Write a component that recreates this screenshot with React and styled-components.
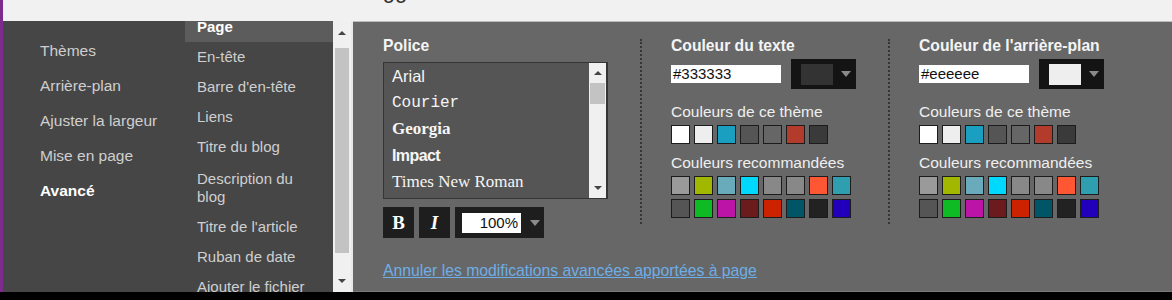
import React from 'react'
import styled, { createGlobalStyle } from 'styled-components';

const Global = createGlobalStyle`
    html, body { margin: 0; padding: 0; background: #000; }
    body { font-family: "Liberation Sans", Arial, sans-serif; }
    * { box-sizing: border-box; }
`;

const Frame = styled.div`
    width: 1172px;
    height: 300px;
    overflow: hidden;
    display: flex;
    flex-direction: column;
    background: #000;
`;

const Top = styled.div`
    height: 292px;
    display: flex;
    flex-direction: column;
    border-left: 3px solid #7d2b8c;
`;

const Header = styled.div`
    height: 21px;
    flex: none;
    overflow: hidden;
    background: #f1f1f1;
    padding-left: 348px;
`;

const Title = styled.div`
    font-size: 22px;
    line-height: 22px;
    margin-top: -20px;
    color: #333;
`;

const Body = styled.div`
    flex: 1;
    display: flex;
    min-height: 0;
`;

const Side = styled.div`
    width: 330px;
    display: flex;
    background: #464646;
`;

const Nav = styled.ul`
    list-style: none;
    margin: 0;
    padding: 12px 0 0 37px;
    width: 182px;
`;

const NavItem = styled.li`
    height: 35px;
    line-height: 35px;
    font-size: 15.5px;
    color: ${p => p.$active ? '#fff' : '#cfcfcf'};
    font-weight: ${p => p.$active ? 'bold' : 'normal'};
    white-space: nowrap;
`;

const Sub = styled.div`
    width: 148px;
    overflow: hidden;
`;

const SubList = styled.ul`
    list-style: none;
    margin: -9px 0 0;
    padding: 0;
`;

const SubItem = styled.li`
    padding: ${p => p.$wrap ? '8px 8px 6px 12px' : '6px 8px 6px 12px'};
    line-height: 18px;
    font-size: 15px;
    color: ${p => p.$active ? '#fff' : '#cfcfcf'};
    font-weight: ${p => p.$active ? 'bold' : 'normal'};
    background: ${p => p.$active ? '#5c5c5c' : 'transparent'};
`;

const Scroll = styled.div`
    width: 18px;
    background: #f0f0f0;
    display: flex;
    flex-direction: column;
    align-items: center;
    padding: 0 2px;
`;

const Arrow = styled.div`
    height: ${p => p.$h || 20}px;
    width: 100%;
    display: flex;
    align-items: center;
    justify-content: center;
    &::before {
        content: '';
        border-left: 4px solid transparent;
        border-right: 4px solid transparent;
        ${p => p.$down ? 'border-top: 4px solid #444;' : 'border-bottom: 4px solid #444;'}
    }
`;

const Thumb = styled.div`
    width: 100%;
    height: ${p => p.$h}px;
    background: #c3c3c3;
    margin-top: ${p => p.$top || 0}px;
`;

const Spacer = styled.div`
    flex: 1;
`;

const Gap = styled.div`
    width: 2px;
    background: #e8e8e8;
`;

const Main = styled.div`
    flex: 1;
    background: #676767;
    border-top: 1px solid #bdbdbd;
    border-bottom: 1px solid #7a7a7a;
    padding: 16px 0 0 30px;
    display: flex;
    flex-direction: column;
`;

const Columns = styled.div`
    display: flex;
    align-items: flex-start;
`;

const Col = styled.div`
    width: ${p => p.$w}px;
    padding-right: 30px;
    display: flex;
    flex-direction: column;
`;

const Sep = styled.div`
    width: 2px;
    height: 185px;
    margin-top: 1px;
    border-left: 2px dotted #353535;
    margin-right: 29px;
`;

const Heading = styled.div`
    font-size: 15.7px;
    font-weight: bold;
    color: #f4f4f4;
    line-height: 16px;
    margin-bottom: 8px;
    white-space: nowrap;
`;

const FontBox = styled.div`
    width: 225px;
    height: 137px;
    border: 1px solid #353535;
    border-right-width: 2px;
    background: #555;
    display: flex;
`;

const FontList = styled.ul`
    list-style: none;
    margin: 0;
    padding: 0;
    flex: 1;
`;

const FontItem = styled.li`
    height: 26.6px;
    line-height: 26px;
    padding-left: 8px;
    color: #f6f6f6;
    font-family: ${p => p.$family};
    font-size: ${p => p.$size || 16}px;
    font-weight: ${p => p.$bold ? 'bold' : 'normal'};
    letter-spacing: ${p => p.$ls || 0}px;
`;

const BoxScroll = styled(Scroll)`
    width: 17px;
    padding: 0 1px;
`;

const Tools = styled.div`
    display: flex;
    gap: 5px;
    margin-top: 8px;
`;

const ToolBtn = styled.div`
    width: 31px;
    height: 31px;
    background: #1e1e1e;
    color: #fff;
    display: flex;
    align-items: center;
    justify-content: center;
    font-family: "Liberation Serif", "Times New Roman", serif;
    font-weight: bold;
    font-size: 19px;
    font-style: ${p => p.$italic ? 'italic' : 'normal'};
`;

const SizeBox = styled.div`
    width: 89px;
    height: 31px;
    background: #1e1e1e;
    display: flex;
    align-items: center;
    padding-left: 7px;
    gap: 9px;
`;

const SizeInput = styled.div`
    width: 59px;
    height: 20px;
    background: #fff;
    color: #111;
    font-size: 15px;
    line-height: 20px;
    text-align: right;
    padding-right: 3px;
`;

const Caret = styled.div`
    border-left: 5px solid transparent;
    border-right: 5px solid transparent;
    border-top: 6px solid #8a8a8a;
`;

const Link = styled.a`
    margin-top: 24px;
    font-size: 15.75px;
    color: #6eaee6;
    text-decoration: underline;
`;

const PickRow = styled.div`
    display: flex;
    align-items: center;
    gap: 10px;
    margin-top: -3px;
`;

const HexInput = styled.div`
    width: 110px;
    height: 18px;
    background: #fff;
    color: #111;
    font-size: 15px;
    line-height: 18px;
    padding-left: 2px;
`;

const PickBtn = styled.div`
    width: 65px;
    height: 30px;
    background: #141414;
    display: flex;
    align-items: center;
    padding-left: 10px;
    gap: 8px;
`;

const PickSwatch = styled.div`
    width: 32px;
    height: 21px;
    background: ${p => p.$c};
`;

const Label = styled.div`
    font-size: 15.5px;
    color: #efefef;
    line-height: 17px;
    margin-top: ${p => p.$mt}px;
    margin-bottom: 5px;
    white-space: nowrap;
`;

const Swatches = styled.div`
    display: flex;
    gap: 4px;
    margin-bottom: 4px;
`;

const Swatch = styled.div`
    width: 19px;
    height: 19px;
    background: ${p => p.$c};
    border: 1px solid #1c1c1c;
`;

const Bottom = styled.div`
    flex: 1;
    background: #000;
`;

const navItems = ['Thèmes', 'Arrière-plan', 'Ajuster la largeur', 'Mise en page', 'Avancé'];
const subItems = ['Page', 'En-tête', "Barre d'en-tête", 'Liens', 'Titre du blog', 'Description du blog', "Titre de l'article", 'Ruban de date', 'Ajouter le fichier'];
const fonts = [
    { name: 'Arial', family: '"Liberation Sans", Arial, sans-serif', size: 16.5 },
    { name: 'Courier', family: '"Liberation Mono", "Courier New", monospace', size: 16 },
    { name: 'Georgia', family: '"Liberation Serif", Georgia, serif', size: 17, bold: true },
    { name: 'Impact', family: '"Liberation Sans Narrow", "Liberation Sans", sans-serif', size: 16, bold: true, ls: -0.6 },
    { name: 'Times New Roman', family: '"Liberation Serif", "Times New Roman", serif', size: 17 },
];
const theme = ['#ffffff', '#eeeeee', '#1a9fc0', '#555555', '#666666', '#b33b2c', '#3a3a3a'];
const rec1 = ['#9a9a9a', '#a2b800', '#6aabbb', '#00d9ff', '#888888', '#888888', '#ff5634', '#2f9fb0'];
const rec2 = ['#555555', '#0fbb25', '#bb14a6', '#6b1b1b', '#cc2200', '#005566', '#222222', '#2200bb'];

function ColorColumn({ title, hex, swatch, w }) {
    return (
        <Col $w={w}>
            <Heading>{title}</Heading>
            <PickRow>
                <HexInput>{hex}</HexInput>
                <PickBtn><PickSwatch $c={swatch} /><Caret /></PickBtn>
            </PickRow>
            <Label $mt={14}>Couleurs de ce thème</Label>
            <Swatches>{theme.map((c, i) => <Swatch key={i} $c={c} />)}</Swatches>
            <Label $mt={6}>Couleurs recommandées</Label>
            <Swatches>{rec1.map((c, i) => <Swatch key={i} $c={c} />)}</Swatches>
            <Swatches>{rec2.map((c, i) => <Swatch key={i} $c={c} />)}</Swatches>
        </Col>
    )
}

function App() {
    return (
        <>
            <Global />
            <Frame>
                <Top>
                    <Header><Title>Blogger</Title></Header>
                    <Body>
                        <Side>
                            <Nav>
                                {navItems.map(n => <NavItem key={n} $active={n === 'Avancé'}>{n}</NavItem>)}
                            </Nav>
                            <Sub>
                                <SubList>
                                    {subItems.map(n => (
                                        <SubItem key={n} $active={n === 'Page'} $wrap={n === 'Description du blog'}>{n}</SubItem>
                                    ))}
                                </SubList>
                            </Sub>
                        </Side>
                        <Scroll>
                            <Arrow $h={24} />
                            <Thumb $h={205} $top={3} />
                            <Spacer />
                            <Arrow $down $h={22} />
                        </Scroll>
                        <Gap />
                        <Main>
                            <Columns>
                                <Col $w={257}>
                                    <Heading>Police</Heading>
                                    <FontBox>
                                        <FontList>
                                            {fonts.map(f => (
                                                <FontItem key={f.name} $family={f.family} $size={f.size} $bold={f.bold} $ls={f.ls}>{f.name}</FontItem>
                                            ))}
                                        </FontList>
                                        <BoxScroll>
                                            <Arrow $h={20} />
                                            <Thumb $h={21} />
                                            <Spacer />
                                            <Arrow $down $h={20} />
                                        </BoxScroll>
                                    </FontBox>
                                    <Tools>
                                        <ToolBtn>B</ToolBtn>
                                        <ToolBtn $italic>I</ToolBtn>
                                        <SizeBox><SizeInput>100%</SizeInput><Caret /></SizeBox>
                                    </Tools>
                                </Col>
                                <Sep />
                                <ColorColumn w={217} title="Couleur du texte" hex="#333333" swatch="#333333" />
                                <Sep />
                                <ColorColumn w={250} title="Couleur de l'arrière-plan" hex="#eeeeee" swatch="#eeeeee" />
                            </Columns>
                            <Link>Annuler les modifications avancées apportées à page</Link>
                        </Main>
                    </Body>
                </Top>
                <Bottom />
            </Frame>
        </>
    )
}

export default App
